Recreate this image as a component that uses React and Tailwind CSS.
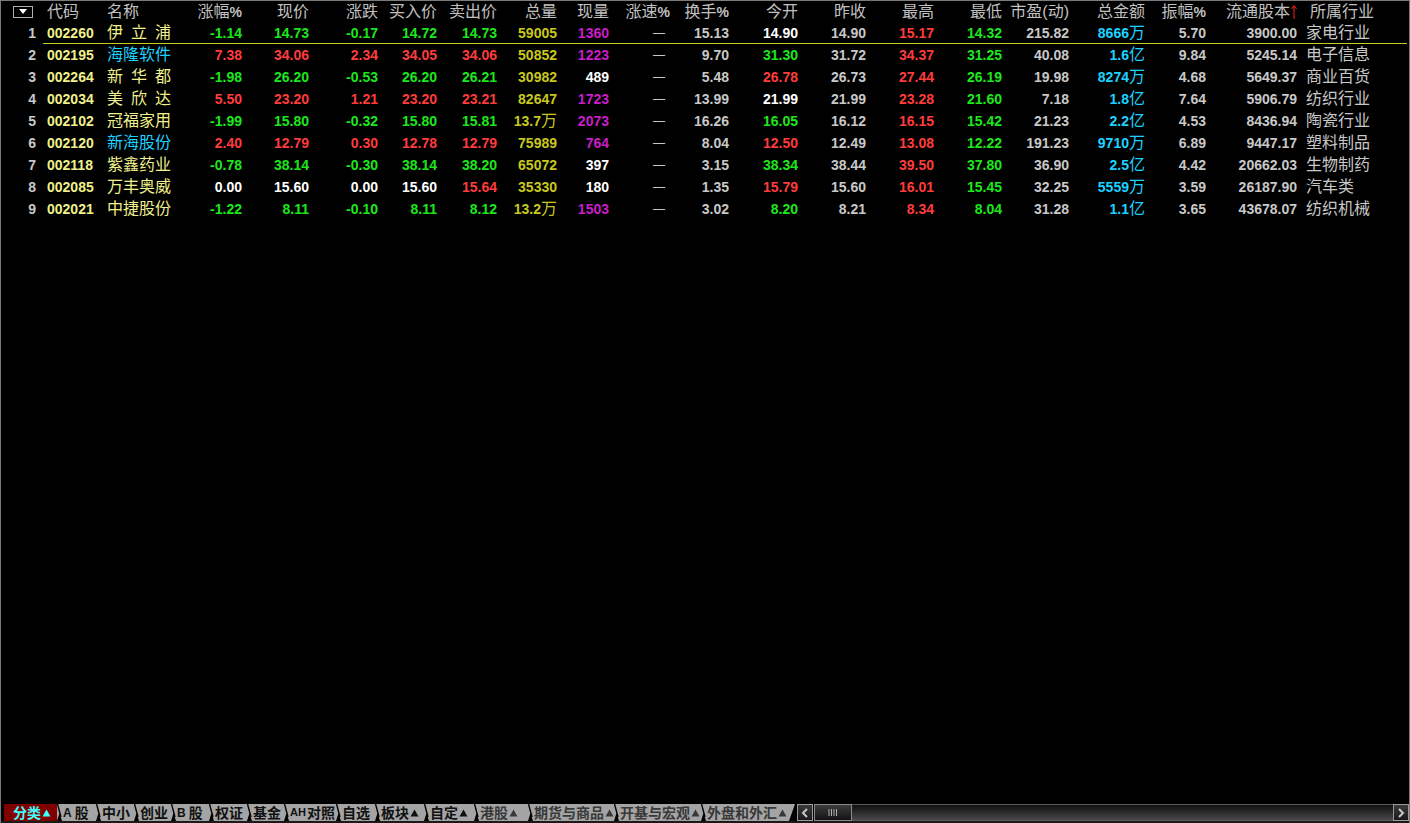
import React from 'react';

const G = 'text-[#1ee61e]';
const R = 'text-[#ff3c3c]';
const W = 'text-white';
const S = 'text-[#c8c8c8]';
const Y = 'text-[#c8c81e]';
const M = 'text-[#c81ec8]';
const C = 'text-[#1ed2ff]';
const NY = 'text-[#f0f08c]';
const NC = 'text-[#1ed2ff]';

// widths of the data columns after the name column (涨幅% .. 流通股本)
const numCols = [
  { h: '涨幅%', w: 'w-[57px]' },
  { h: '现价', w: 'w-[67px]' },
  { h: '涨跌', w: 'w-[69px]' },
  { h: '买入价', w: 'w-[59px]' },
  { h: '卖出价', w: 'w-[60px]' },
  { h: '总量', w: 'w-[60px]' },
  { h: '现量', w: 'w-[52px]' },
  { h: '涨速%', w: 'w-[61px]' },
  { h: '换手%', w: 'w-[59px]' },
  { h: '今开', w: 'w-[69px]' },
  { h: '昨收', w: 'w-[68px]' },
  { h: '最高', w: 'w-[68px]' },
  { h: '最低', w: 'w-[68px]' },
  { h: '市盈(动)', w: 'w-[67px]' },
  { h: '总金额', w: 'w-[76px]' },
  { h: '振幅%', w: 'w-[61px]' },
  { h: '流通股本', w: 'w-[91px]' },
];

const D = ['—', S];

const rows = [
  {
    code: '002260', name: '伊\u2002立\u2002浦', nc: NY, hy: '家电行业',
    cells: [['-1.14', G], ['14.73', G], ['-0.17', G], ['14.72', G], ['14.73', G], ['59005', Y], ['1360', M], D, ['15.13', S], ['14.90', W], ['14.90', S], ['15.17', R], ['14.32', G], ['215.82', S], ['8666万', C], ['5.70', S], ['3900.00', S]],
  },
  {
    code: '002195', name: '海隆软件', nc: NC, hy: '电子信息',
    cells: [['7.38', R], ['34.06', R], ['2.34', R], ['34.05', R], ['34.06', R], ['50852', Y], ['1223', M], D, ['9.70', S], ['31.30', G], ['31.72', S], ['34.37', R], ['31.25', G], ['40.08', S], ['1.6亿', C], ['9.84', S], ['5245.14', S]],
  },
  {
    code: '002264', name: '新\u2002华\u2002都', nc: NY, hy: '商业百货',
    cells: [['-1.98', G], ['26.20', G], ['-0.53', G], ['26.20', G], ['26.21', G], ['30982', Y], ['489', W], D, ['5.48', S], ['26.78', R], ['26.73', S], ['27.44', R], ['26.19', G], ['19.98', S], ['8274万', C], ['4.68', S], ['5649.37', S]],
  },
  {
    code: '002034', name: '美\u2002欣\u2002达', nc: NY, hy: '纺织行业',
    cells: [['5.50', R], ['23.20', R], ['1.21', R], ['23.20', R], ['23.21', R], ['82647', Y], ['1723', M], D, ['13.99', S], ['21.99', W], ['21.99', S], ['23.28', R], ['21.60', G], ['7.18', S], ['1.8亿', C], ['7.64', S], ['5906.79', S]],
  },
  {
    code: '002102', name: '冠福家用', nc: NY, hy: '陶瓷行业',
    cells: [['-1.99', G], ['15.80', G], ['-0.32', G], ['15.80', G], ['15.81', G], ['13.7万', Y], ['2073', M], D, ['16.26', S], ['16.05', G], ['16.12', S], ['16.15', R], ['15.42', G], ['21.23', S], ['2.2亿', C], ['4.53', S], ['8436.94', S]],
  },
  {
    code: '002120', name: '新海股份', nc: NC, hy: '塑料制品',
    cells: [['2.40', R], ['12.79', R], ['0.30', R], ['12.78', R], ['12.79', R], ['75989', Y], ['764', M], D, ['8.04', S], ['12.50', R], ['12.49', S], ['13.08', R], ['12.22', G], ['191.23', S], ['9710万', C], ['6.89', S], ['9447.17', S]],
  },
  {
    code: '002118', name: '紫鑫药业', nc: NY, hy: '生物制药',
    cells: [['-0.78', G], ['38.14', G], ['-0.30', G], ['38.14', G], ['38.20', G], ['65072', Y], ['397', W], D, ['3.15', S], ['38.34', G], ['38.44', S], ['39.50', R], ['37.80', G], ['36.90', S], ['2.5亿', C], ['4.42', S], ['20662.03', S]],
  },
  {
    code: '002085', name: '万丰奥威', nc: NY, hy: '汽车类',
    cells: [['0.00', W], ['15.60', W], ['0.00', W], ['15.60', W], ['15.64', R], ['35330', Y], ['180', W], D, ['1.35', S], ['15.79', R], ['15.60', S], ['16.01', R], ['15.45', G], ['32.25', S], ['5559万', C], ['3.59', S], ['26187.90', S]],
  },
  {
    code: '002021', name: '中捷股份', nc: NY, hy: '纺织机械',
    cells: [['-1.22', G], ['8.11', G], ['-0.10', G], ['8.11', G], ['8.12', G], ['13.2万', Y], ['1503', M], D, ['3.02', S], ['8.20', G], ['8.21', S], ['8.34', R], ['8.04', G], ['31.28', S], ['1.1亿', C], ['3.65', S], ['43678.07', S]],
  },
];

const tabs = [
  { t: '分类', arrow: true, w: 'w-[53px]', active: true },
  { t: 'A股', w: 'w-[39px]', latin: 'A' },
  { t: '中小', w: 'w-[38px]' },
  { t: '创业', w: 'w-[37px]' },
  { t: 'B股', w: 'w-[38px]', latin: 'B' },
  { t: '权证', w: 'w-[38px]' },
  { t: '基金', w: 'w-[37px]' },
  { t: 'AH对照', w: 'w-[52px]', latin: 'AH', tight: true },
  { t: '自选', w: 'w-[39px]' },
  { t: '板块', arrow: true, w: 'w-[49px]' },
  { t: '自定', arrow: true, w: 'w-[50px]' },
  { t: '港股', arrow: true, w: 'w-[54px]', dim: true },
  { t: '期货与商品', arrow: true, w: 'w-[86px]', dim: true },
  { t: '开基与宏观', arrow: true, w: 'w-[87px]', dim: true },
  { t: '外盘和外汇', arrow: true, w: 'w-[94px]', dim: true, last: true },
];

function HeaderLabel({ text }) {
  if (text.endsWith('%')) {
    return (
      <span className="flex items-center">
        <span>{text.slice(0, -1)}</span>
        <span className="font-bold text-[14px]">%</span>
      </span>
    );
  }
  return <span>{text}</span>;
}

function Amount({ text }) {
  const unit = text.slice(-1);
  if (unit === '万' || unit === '亿') {
    return (
      <span className="flex items-center">
        <span className="font-bold">{text.slice(0, -1)}</span>
        <span className="font-normal text-[16px]">{unit}</span>
      </span>
    );
  }
  return <span className="font-bold">{text}</span>;
}

function Separator() {
  return (
    <svg width="5" height="17" viewBox="0 0 5 17" className="shrink-0">
      <path d="M0.5 0 L4 13" stroke="#000" strokeWidth="1.4" />
      <path d="M0 17 L2.5 9 L5 17 Z" fill="#000" />
    </svg>
  );
}

function Tri({ color }) {
  return (
    <svg width="9" height="8" viewBox="0 0 9 8" className="shrink-0 ml-[1px]">
      <path d="M0.5 7.5 L4.5 0.5 L8.5 7.5 Z" fill={color} />
    </svg>
  );
}

function Tab({ tab }) {
  const textColor = tab.active ? 'text-[#40ffff]' : tab.dim ? 'text-[#383838]' : 'text-[#101010]';
  const triColor = tab.active ? '#40ffff' : tab.dim ? '#383838' : '#101010';
  return (
    <div className={`${tab.w} h-[17px] flex items-center shrink-0 overflow-hidden whitespace-nowrap ${tab.active ? 'bg-[#800000] pl-[8px]' : 'bg-[#a4a4a4]'} ${textColor}`}>
      {!tab.active && <Separator />}
      <span className="flex items-center text-[14px] font-bold leading-none pl-[1px]">
        {tab.latin ? (
          <>
            <span className={`font-['Liberation_Sans'] ${tab.tight ? 'text-[11px] mr-[1px]' : 'text-[12px] mr-[3px]'}`}>{tab.latin}</span>
            <span>{tab.t.slice(tab.latin.length)}</span>
          </>
        ) : (
          <span>{tab.t}</span>
        )}
        {tab.arrow && <Tri color={triColor} />}
      </span>
      {tab.last && (
        <svg width="6" height="17" viewBox="0 0 6 17" className="ml-auto shrink-0">
          <path d="M0 17 L6 0 L6 17 Z" fill="#000" />
        </svg>
      )}
    </div>
  );
}

function ScrollBtn({ dir }) {
  return (
    <div className="w-[16px] h-[17px] shrink-0 border border-[#9a9a9a] bg-gradient-to-b from-[#3a3a3a] to-[#1a1a1a] flex items-center justify-center">
      <svg width="8" height="10" viewBox="0 0 8 10">
        {dir === 'left' ? (
          <path d="M6 1 L2 5 L6 9" stroke="#c8c8c8" strokeWidth="2" fill="none" />
        ) : (
          <path d="M2 1 L6 5 L2 9" stroke="#c8c8c8" strokeWidth="2" fill="none" />
        )}
      </svg>
    </div>
  );
}

export default function App() {
  return (
    <div className="w-[1410px] h-[823px] bg-black border-t border-x border-[#7a7a7a] flex flex-col overflow-hidden font-['Liberation_Sans','Noto_Sans_CJK_SC',sans-serif] select-none">
      <div className="flex-1 flex flex-col">
        {/* header */}
        <div className="h-[21px] flex items-center text-[16px] text-[#c0c0c0] leading-none shrink-0">
          <div className="w-[35px] flex items-center pl-[12px]">
            <div className="w-[20px] h-[12px] border border-[#b0b0b0] flex items-center justify-center">
              <svg width="8" height="5" viewBox="0 0 8 5">
                <path d="M0 0 L8 0 L4 5 Z" fill="#fff" />
              </svg>
            </div>
          </div>
          <div className="w-[71px] pl-[11px]">代码</div>
          <div className="w-[78px]">名称</div>
          {numCols.map((c) => (
            <div key={c.h} className={`${c.w} flex justify-end shrink-0`}>
              {c.h === '流通股本' ? (
                <span className="flex items-center">
                  <span>流通股本</span>
                  <svg width="6" height="14" viewBox="0 0 6 14" className="ml-[1px]">
                    <path d="M3 1 L3 14" stroke="#ff2020" strokeWidth="1" />
                    <path d="M0.5 4 L3 0.5 L5.5 4" stroke="#ff2020" strokeWidth="1" fill="none" />
                  </svg>
                </span>
              ) : (
                <HeaderLabel text={c.h} />
              )}
            </div>
          ))}
          <div className="pl-[13px]">所属行业</div>
        </div>

        {/* rows */}
        {rows.map((r, i) => (
          <React.Fragment key={r.code}>
            <div className={`${i === 0 ? 'h-[21px]' : 'h-[22px]'} flex items-center leading-none text-[14px] shrink-0`}>
              <div className={`w-[35px] flex justify-end font-bold ${S}`}>{i + 1}</div>
              <div className={`w-[71px] pl-[11px] font-bold ${NY}`}>{r.code}</div>
              <div className={`w-[78px] text-[16px] whitespace-pre ${r.nc}`}>{r.name}</div>
              {r.cells.map(([v, col], j) => (
                <div key={j} className={`${numCols[j].w} flex justify-end shrink-0 ${col} ${v === '—' ? 'pr-[5px] text-[12px]' : ''}`}>
                  {v === '—' ? <span>—</span> : <Amount text={v} />}
                </div>
              ))}
              <div className={`pl-[9px] text-[16px] ${S}`}>{r.hy}</div>
            </div>
            {i === 0 && <div className="h-[1px] ml-[42px] mr-[2px] bg-[#c8c81e] shrink-0" />}
          </React.Fragment>
        ))}
      </div>

      {/* bottom tabs + scrollbar */}
      <div className="h-[17px] flex items-stretch shrink-0 pl-[3px]">
        <div className="flex">
          {tabs.map((t) => (
            <Tab key={t.t} tab={t} />
          ))}
        </div>
        <div className="ml-[2px] flex-1 flex h-[17px]">
          <ScrollBtn dir="left" />
          <div className="w-[38px] h-[17px] shrink-0 ml-[1px] border border-[#8a8a8a] bg-gradient-to-b from-[#3c3c3c] to-[#141414] flex items-center justify-center">
            <svg width="10" height="7" viewBox="0 0 10 7">
              <path d="M1 0 V7 M3.5 0 V7 M6 0 V7 M8.5 0 V7" stroke="#b0b0b0" strokeWidth="1" />
            </svg>
          </div>
          <div className="flex-1 h-[17px] border-y border-[#5a5a5a] bg-gradient-to-b from-[#101010] to-[#4a4a4a]" />
          <ScrollBtn dir="right" />
        </div>
      </div>
      <div className="h-[2px] shrink-0 bg-[#1a1a1a]" />
    </div>
  );
}
